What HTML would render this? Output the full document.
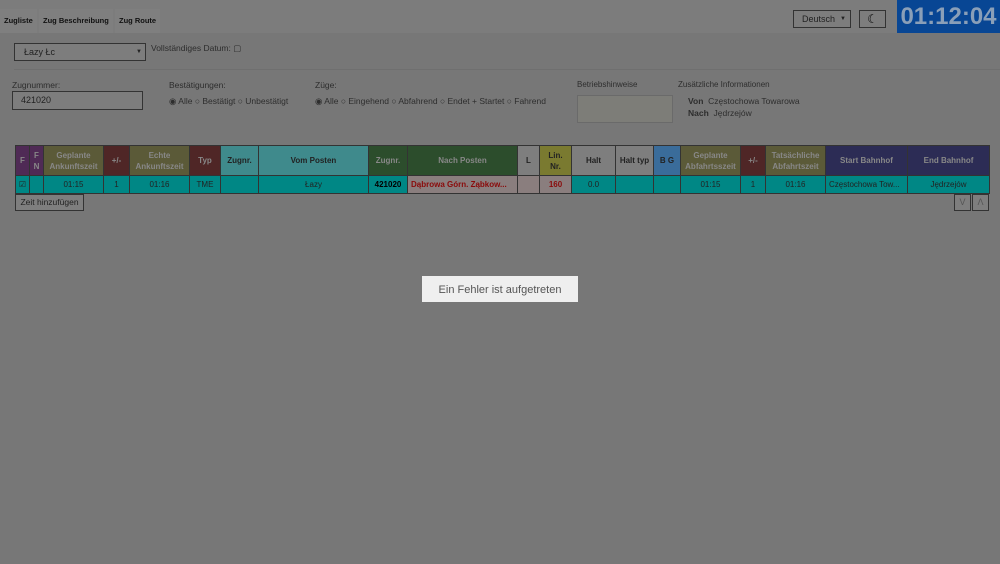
<!DOCTYPE html>
<html><head><meta charset="utf-8"><style>
*{box-sizing:border-box;margin:0;padding:0}
body{width:1000px;height:564px;background:#777;font-family:"Liberation Sans",sans-serif;position:relative;overflow:hidden;color:#222;font-size:9px}
.top{position:absolute;left:0;top:0;width:1000px;height:33px;background:#7c7c7c}
.tab{position:absolute;top:9px;height:24px;background:#7f7f7f;font-weight:bold;font-size:7.5px;line-height:23px;padding:0 4px;color:#111}
.a{position:absolute}
.sel{border:1px solid #333;background:#7d7d7d}
.clock{position:absolute;left:897px;top:0;width:103px;height:33px;background:#084694;color:#8a9fb8;font-weight:bold;font-size:24px;line-height:33px;text-align:center}
.lbl{color:#2d2d2d;font-size:8.5px}
table{position:absolute;left:15px;top:145px;border-collapse:collapse;font-size:8px}
td,th{border:1px solid #333;text-align:center;padding:0}
th{height:30px;font-weight:bold;line-height:11px}
td{height:18px;background:#008785;color:#222}
.btn{border:1px solid #333;background:#7e7e7e}
.err{position:absolute;left:422px;top:276px;width:156px;height:26px;background:#efefef;color:#555;font-size:11px;text-align:center;line-height:28px}
</style></head><body>
<div class="top"></div>
<div class="tab" style="left:0">Zugliste</div>
<div class="tab" style="left:39px">Zug Beschreibung</div>
<div class="tab" style="left:115px">Zug Route</div>
<div class="a sel" style="left:793px;top:10px;width:58px;height:18px;font-size:9px;line-height:16px;padding-left:8px">Deutsch<span style="position:absolute;right:4px;font-size:6px">▼</span></div>
<div class="a sel" style="left:859px;top:10px;width:27px;height:18px;text-align:center;font-size:12px;line-height:16px;color:#000">☾</div>
<div class="clock">01:12:04</div>
<div class="a sel" style="left:14px;top:43px;width:132px;height:18px;font-size:9px;line-height:16px;padding-left:9px">Łazy Łc<span style="position:absolute;right:3px;font-size:6px">▼</span></div>
<div class="a lbl" style="left:151px;top:43px">Vollständiges Datum: ▢</div>
<div class="a" style="left:14px;top:69px;width:986px;border-top:1px solid #6f6f6f"></div>
<div class="a lbl" style="left:12px;top:80px">Zugnummer:</div>
<div class="a sel" style="left:12px;top:91px;width:131px;height:19px;font-size:9px;line-height:17px;padding-left:8px">421020</div>
<div class="a lbl" style="left:169px;top:80px">Bestätigungen:</div>
<div class="a lbl" style="left:169px;top:96px">◉ Alle ○ Bestätigt ○ Unbestätigt</div>
<div class="a lbl" style="left:315px;top:80px">Züge:</div>
<div class="a lbl" style="left:315px;top:96px">◉ Alle ○ Eingehend ○ Abfahrend ○ Endet + Startet ○ Fahrend</div>
<div class="a lbl" style="left:577px;top:80px;font-size:8px">Betriebshinweise</div>
<div class="a" style="left:577px;top:95px;width:96px;height:28px;background:#7d7d78;border:1px solid #6a6a6a"></div>
<div class="a lbl" style="left:678px;top:80px;font-size:8px">Zusätzliche Informationen</div>
<div class="a lbl" style="left:688px;top:96px"><b>Von</b>&nbsp; Częstochowa Towarowa</div>
<div class="a lbl" style="left:688px;top:108px"><b>Nach</b>&nbsp; Jędrzejów</div>
<table>
<tr>
<th style="width:14px;background:#4f2a55;color:#888">F</th>
<th style="width:14px;background:#4f2a55;color:#888">F<br>N</th>
<th style="width:60px;background:#5b5a38;color:#888">Geplante<br>Ankunftszeit</th>
<th style="width:26px;background:#4f2626;color:#888">+/-</th>
<th style="width:60px;background:#5b5a38;color:#888">Echte<br>Ankunftszeit</th>
<th style="width:31px;background:#4f2626;color:#888">Typ</th>
<th style="width:38px;background:#3f8a8c">Zugnr.</th>
<th style="width:110px;background:#3f8a8c">Vom Posten</th>
<th style="width:39px;background:#2c4d2c;color:#888">Zugnr.</th>
<th style="width:110px;background:#2c4d2c;color:#888">Nach Posten</th>
<th style="width:22px;background:#7e7e7e">L</th>
<th style="width:32px;background:#7a7a30">Lin.<br>Nr.</th>
<th style="width:44px;background:#7e7e7e">Halt</th>
<th style="width:38px;background:#7e7e7e">Halt typ</th>
<th style="width:27px;background:#3a6c9a">B G</th>
<th style="width:60px;background:#5b5a38;color:#888">Geplante<br>Abfahrtsszeit</th>
<th style="width:25px;background:#4f2626;color:#888">+/-</th>
<th style="width:60px;background:#5b5a38;color:#888">Tatsächliche<br>Abfahrtszeit</th>
<th style="width:82px;background:#2c2c55;color:#888">Start Bahnhof</th>
<th style="width:82px;background:#2c2c55;color:#888">End Bahnhof</th>
</tr>
<tr>
<td>☑</td><td></td><td>01:15</td><td>1</td><td>01:16</td><td>TME</td><td></td><td>Łazy</td>
<td style="font-weight:bold;color:#000">421020</td>
<td style="background:#8a7e7e;color:#8a0a0a;font-weight:bold;text-align:left;padding-left:3px">Dąbrowa Górn. Ząbkow...</td>
<td style="background:#8a7e7e"></td>
<td style="background:#8a7e7e;color:#8a0a0a;font-weight:bold">160</td>
<td>0.0</td><td></td><td></td><td>01:15</td><td>1</td><td>01:16</td>
<td style="text-align:left;padding-left:3px">Częstochowa Tow...</td><td>Jędrzejów</td>
</tr>
</table>
<div class="a btn" style="left:15px;top:194px;width:69px;height:17px;font-size:8.5px;text-align:center;line-height:15px">Zeit hinzufügen</div>
<div class="a btn" style="left:954px;top:194px;width:17px;height:17px;text-align:center;line-height:15px;color:#555">V</div>
<div class="a btn" style="left:972px;top:194px;width:17px;height:17px;text-align:center;line-height:15px;color:#555">Λ</div>
<div class="err">Ein Fehler ist aufgetreten</div>
</body></html>
